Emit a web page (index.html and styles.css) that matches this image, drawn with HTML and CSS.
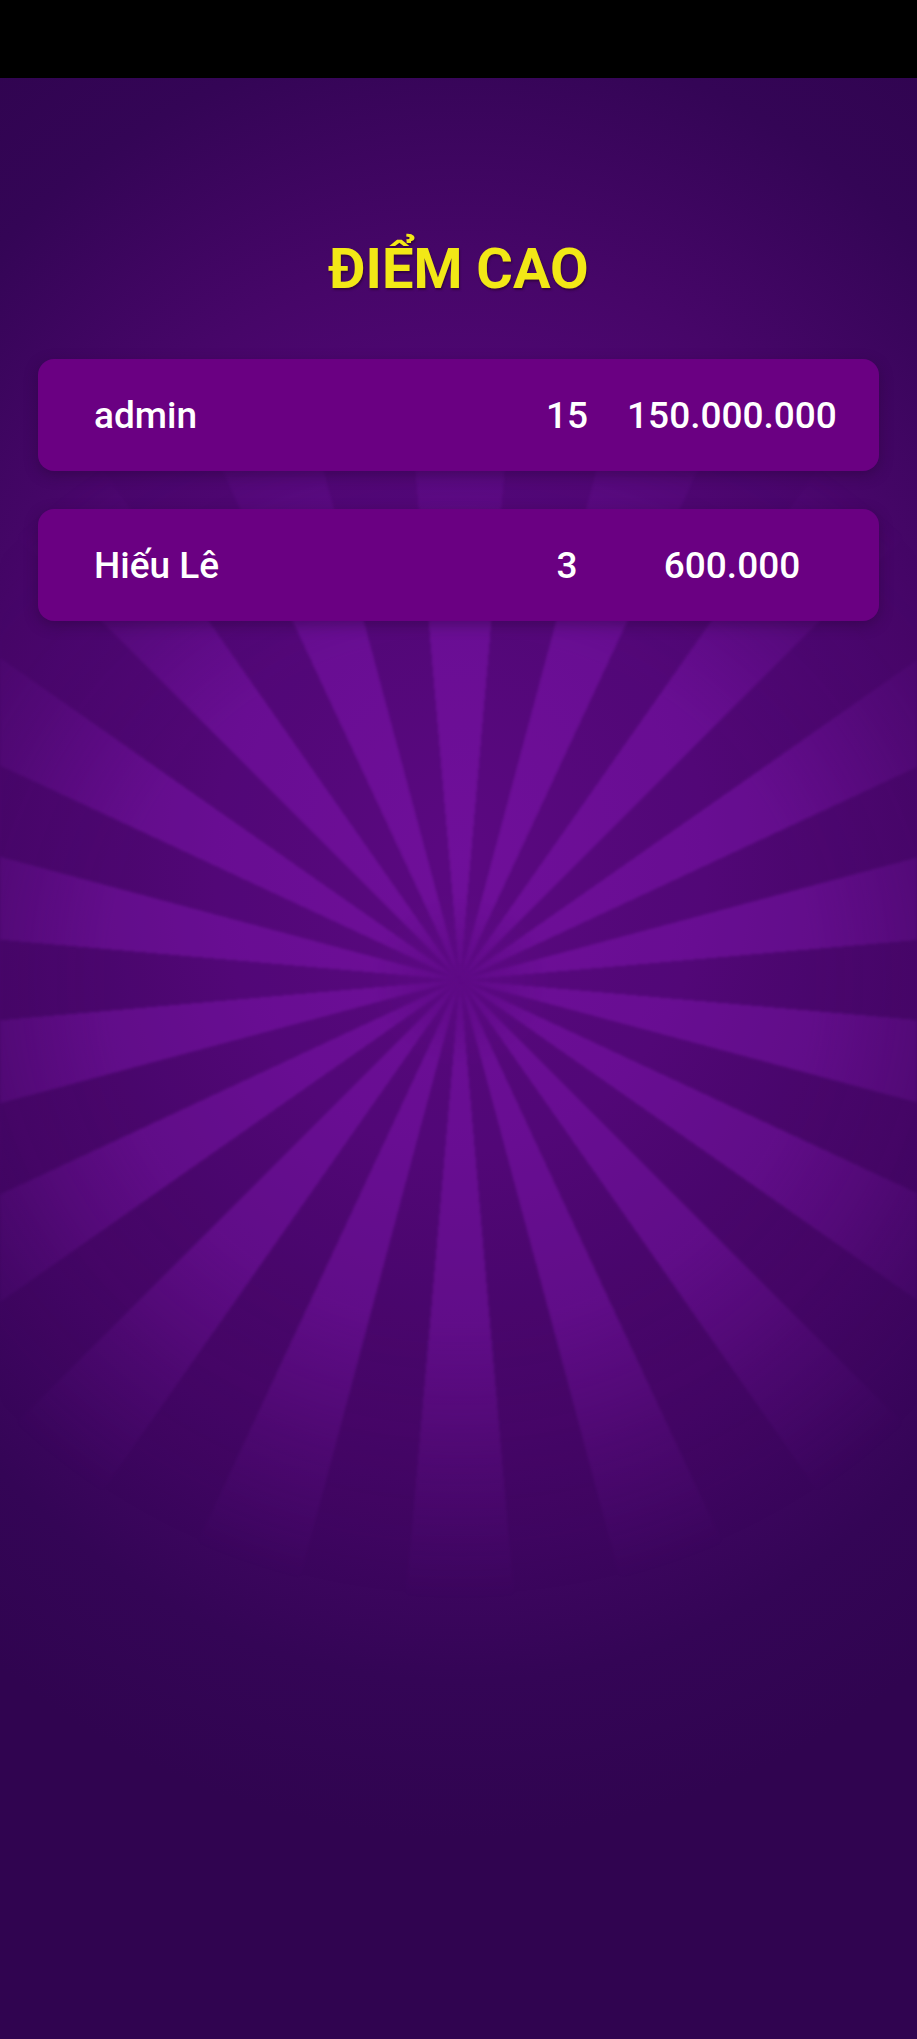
FILE: index.html
```html
<!DOCTYPE html>
<html lang="vi">
<head>
<meta charset="utf-8">
<title>Điểm cao</title>
<link rel="stylesheet" href="styles.css">
</head>
<body>
<div class="status-bar"></div>
<main class="screen">
  <h1 class="title">ĐIỂM CAO</h1>
  <ul class="scores">
    <li class="score-card">
      <span class="name">admin</span>
      <span class="level">15</span>
      <span class="money">150.000.000</span>
    </li>
    <li class="score-card">
      <span class="name">Hiếu Lê</span>
      <span class="level">3</span>
      <span class="money">600.000</span>
    </li>
  </ul>
</main>
</body>
</html>
```

FILE: styles.css
```css
html, body {
  margin: 0;
  padding: 0;
}
body {
  width: 917px;
  height: 2039px;
  display: flex;
  flex-direction: column;
  font-family: Roboto, "Noto Sans", sans-serif;
  background: #000;
}
.status-bar {
  height: 78px;
  flex: 0 0 78px;
  background: #000;
}
.screen {
  position: relative;
  flex: 1;
  padding: 158px 38px 0;
  background:
    radial-gradient(ellipse 820px 980px at 460px 780px,
      #620a8a 0%,
      #58087f 30%,
      #470669 60%,
      #340556 84%,
      #300450 100%);
  background-color: #300450;
}
.screen::before {
  content: "";
  position: absolute;
  inset: 0;
  background: repeating-conic-gradient(from -5deg at 460px 902px,
      rgba(150, 30, 200, 0.26) 0deg 10deg,
      rgba(30, 0, 50, 0.1) 10deg 20deg);
  -webkit-mask-image: radial-gradient(ellipse 640px 620px at 460px 902px,
      rgba(0, 0, 0, 0.1) 0,
      #000 14%,
      #000 55%,
      rgba(0, 0, 0, 0.4) 78%,
      transparent 100%);
  mask-image: radial-gradient(ellipse 640px 620px at 460px 902px,
      rgba(0, 0, 0, 0.1) 0,
      #000 14%,
      #000 55%,
      rgba(0, 0, 0, 0.4) 78%,
      transparent 100%);
  filter: blur(1.5px);
}
.title,
.scores {
  position: relative;
}
.title {
  margin: 0;
  text-align: center;
  font-size: 56px;
  font-weight: 700;
  line-height: normal;
  color: #f2e816;
  text-shadow: 1px 2px 2px rgba(40, 0, 40, 0.6);
}
.scores {
  list-style: none;
  margin: 57px 0 0;
  padding: 0;
  display: flex;
  flex-direction: column;
  gap: 38px;
}
.score-card {
  height: 112px;
  box-sizing: border-box;
  display: flex;
  align-items: center;
  padding: 0 22px 0 56px;
  background: #6a0082;
  border-radius: 16px;
  box-shadow: 0 4px 14px rgba(30, 0, 40, 0.35);
  color: #fff;
  font-size: 37px;
  font-weight: 500;
}
.name {
  flex: 1;
}
.level {
  width: 80px;
  text-align: center;
}
.money {
  width: 250px;
  text-align: center;
}
```
